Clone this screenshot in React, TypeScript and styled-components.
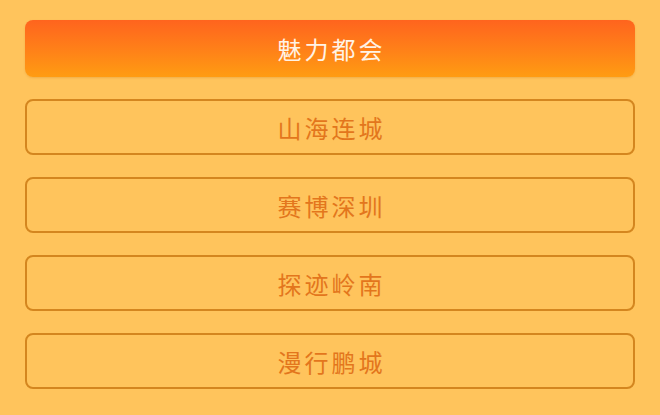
import React, { useState } from "react";
import styled, { createGlobalStyle } from "styled-components";

const GlobalStyle = createGlobalStyle`
  html, body {
    margin: 0;
    padding: 0;
    background: #ffc45c;
  }
  body {
    font-family: "Noto Sans CJK SC", "Noto Sans", sans-serif;
  }
`;

const items = ["魅力都会", "山海连城", "赛博深圳", "探迹岭南", "漫行鹏城"];

const App: React.FC = () => {
  const [active, setActive] = useState(0);

  return (
    <>
      <GlobalStyle />
      <Page>
        <Menu>
          {items.map((label, index) => (
            <Option
              key={label}
              $active={index === active}
              onClick={() => setActive(index)}
            >
              {label}
            </Option>
          ))}
        </Menu>
      </Page>
    </>
  );
};

const Page = styled.div`
  width: 660px;
  height: 415px;
  background: #ffc45c;
  overflow: hidden;
  box-sizing: border-box;
  padding: 20px 25px 0 25px;
`;

const Menu = styled.div`
  display: flex;
  flex-direction: column;
  gap: 22px;
`;

const Option = styled.button<{ $active: boolean }>`
  height: ${(p) => (p.$active ? "57px" : "56px")};
  width: 100%;
  box-sizing: border-box;
  border-radius: 8px;
  border: ${(p) => (p.$active ? "none" : "2px solid #d4861f")};
  background: ${(p) =>
    p.$active
      ? "linear-gradient(180deg, #ff641e 0%, #ff8218 55%, #ff9c12 100%)"
      : "#ffc45c"};
  color: ${(p) => (p.$active ? "#fff3e6" : "#e3761c")};
  font-family: "Noto Sans CJK SC", "Noto Sans", sans-serif;
  font-size: 24px;
  letter-spacing: 3px;
  text-indent: 3px;
  display: flex;
  align-items: center;
  justify-content: center;
  padding: 0;
  cursor: pointer;
  box-shadow: ${(p) => (p.$active ? "0 1px 2px rgba(200, 110, 20, 0.25)" : "none")};
`;

export default App;
